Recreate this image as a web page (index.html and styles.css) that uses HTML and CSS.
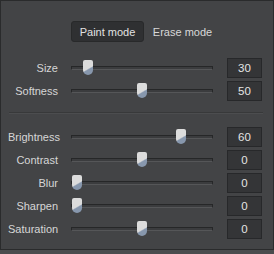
FILE: index.html
```html
<!DOCTYPE html>
<html lang="en">
<head>
    <meta charset="UTF-8">
    <meta name="viewport" content="width=device-width, initial-scale=1.0">
    <title>Brush Settings</title>
    <link rel="stylesheet" href="styles.css">
</head>
<body>

    <div class="panel">
        <!-- Mode switch -->
        <div class="modes">
            <button class="mode active">Paint mode</button>
            <button class="mode">Erase mode</button>
        </div>

        <!-- Brush -->
        <div class="group">
            <div class="row">
                <span class="label">Size</span>
                <div class="track"><span class="thumb" style="left: calc((100% - 10px) * 0.085)"></span></div>
                <div class="value">30</div>
            </div>
            <div class="row">
                <span class="label">Softness</span>
                <div class="track"><span class="thumb" style="left: calc((100% - 10px) * 0.5)"></span></div>
                <div class="value">50</div>
            </div>
        </div>

        <div class="divider"></div>

        <!-- Adjustments -->
        <div class="group">
            <div class="row">
                <span class="label">Brightness</span>
                <div class="track"><span class="thumb" style="left: calc((100% - 10px) * 0.8)"></span></div>
                <div class="value">60</div>
            </div>
            <div class="row">
                <span class="label">Contrast</span>
                <div class="track"><span class="thumb" style="left: calc((100% - 10px) * 0.5)"></span></div>
                <div class="value">0</div>
            </div>
            <div class="row">
                <span class="label">Blur</span>
                <div class="track"><span class="thumb" style="left: 0"></span></div>
                <div class="value">0</div>
            </div>
            <div class="row">
                <span class="label">Sharpen</span>
                <div class="track"><span class="thumb" style="left: 0"></span></div>
                <div class="value">0</div>
            </div>
            <div class="row">
                <span class="label">Saturation</span>
                <div class="track"><span class="thumb" style="left: calc((100% - 10px) * 0.5)"></span></div>
                <div class="value">0</div>
            </div>
        </div>
    </div>

</body>
</html>
```

FILE: styles.css
```css
/* General styles */
body {
    margin: 0;
    padding: 0;
    background-color: #4b4c4e;
    font-family: "Liberation Sans", Arial, sans-serif;
    font-size: 11px;
    color: #d6d6d6;
}

.panel {
    box-sizing: border-box;
    width: 274px;
    height: 250px;
    background-color: #434446;
    border: 1px solid #2a2b2c;
    padding: 20px 0 0 7px;
}

/* Mode buttons */
.modes {
    display: flex;
    gap: 2px;
    padding-left: 63px;
}

.mode {
    box-sizing: border-box;
    width: 73px;
    height: 21px;
    padding: 0;
    border: 1px solid transparent;
    border-radius: 3px;
    background: none;
    font-family: inherit;
    font-size: 11px;
    color: #d8d8d8;
}

.mode.active {
    background-color: #2f3032;
    border-color: #28292a;
    color: #e2e2e2;
}

/* Slider rows */
.group {
    display: flex;
    flex-direction: column;
    gap: 3px;
}

.modes + .group {
    margin-top: 16px;
}

.row {
    display: grid;
    grid-template-columns: 50px 141px 35px;
    column-gap: 14px;
    align-items: center;
    height: 20px;
}

.label {
    text-align: right;
}

.track {
    position: relative;
    box-sizing: border-box;
    height: 4px;
    margin-left: -1px;
    border: 1px solid #262728;
    border-bottom-color: #555658;
    background-color: #3b3c3e;
}

.thumb {
    position: absolute;
    top: -7px;
    width: 10px;
    height: 15px;
    border-radius: 2px 2px 5px 5px;
    background: linear-gradient(150deg, #dcdcdc 55%, #8797ad 62%);
}

.value {
    box-sizing: border-box;
    height: 20px;
    line-height: 18px;
    border: 1px solid #27282a;
    background-color: #343537;
    text-align: center;
    font-size: 11.5px;
    color: #e4e4e4;
}

.divider {
    height: 1px;
    margin: 11px 10px 13px 1px;
    background-color: #38393a;
    border-bottom: 1px solid #4c4d4f;
}
```
